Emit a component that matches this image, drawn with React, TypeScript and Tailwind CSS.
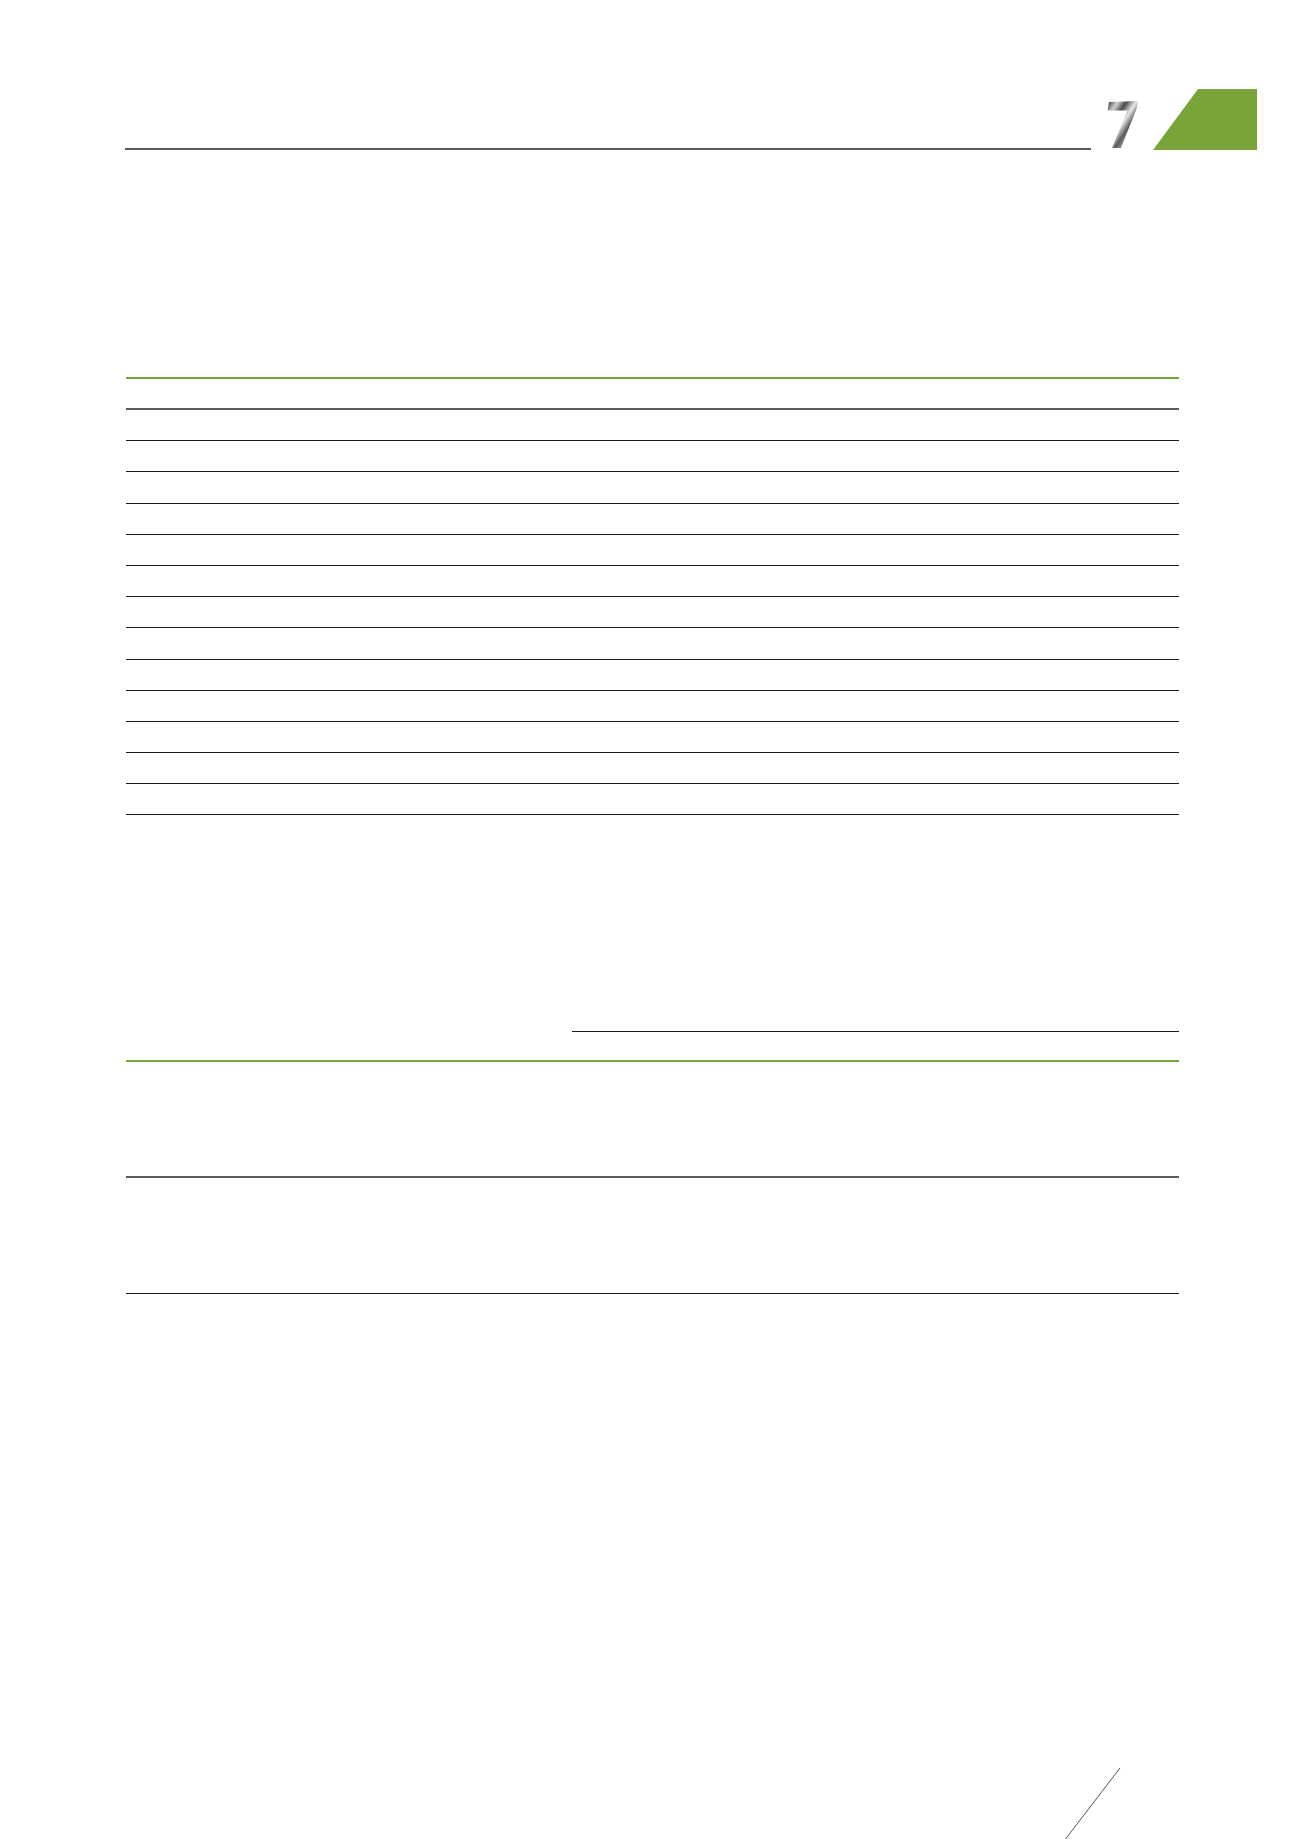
const green = "border-[#78a43a]";

function SevenMark() {
  return (
    <svg width="31" height="48" viewBox="0 0 31 48" className="ml-[16px] mb-[1px]">
      <defs>
        <linearGradient id="chrome" x1="0" y1="0" x2="1" y2="1">
          <stop offset="0" stopColor="#2a2a2a" />
          <stop offset="0.18" stopColor="#d0d0d0" />
          <stop offset="0.32" stopColor="#4a4a4a" />
          <stop offset="0.48" stopColor="#e8e8e8" />
          <stop offset="0.62" stopColor="#5a5a5a" />
          <stop offset="0.78" stopColor="#bdbdbd" />
          <stop offset="1" stopColor="#111111" />
        </linearGradient>
      </defs>
      <path d="M2 1 L31 0 L29.5 8 L14 47 L5 47 L20.5 9.5 L0.5 9.5 Z" fill="url(#chrome)" />
    </svg>
  );
}

function Header() {
  return (
    <div className="flex items-end pl-[125px] pt-[89px]">
      <div className="w-[966px] h-[2px] bg-[#5a5a5a]" />
      <SevenMark />
      <svg width="104" height="61" viewBox="0 0 104 61" className="ml-[15px]">
        <polygon points="0,61 45,0 104,0 104,61" fill="#78a43a" />
      </svg>
    </div>
  );
}

function FirstTable() {
  const cols = [0, 1, 2];
  const rows = Array.from({ length: 13 }, (_, i) => i);
  return (
    <div className="mt-[227px] pl-[126px]">
      <div className="grid w-[1053px] grid-cols-[470px_291px_292px]">
        {cols.map((c) => (
          <div key={`h${c}`} className={`h-[33px] border-t-2 ${green} border-b-2 border-b-[#5a5a5a]`} />
        ))}
        {rows.map((r) =>
          cols.map((c) => (
            <div key={`${r}-${c}`} className="h-[31.2px] border-b border-[#1a1a1a]" />
          ))
        )}
      </div>
    </div>
  );
}

function SecondTable() {
  const cols = [0, 1, 2, 3, 4, 5, 6];
  return (
    <div className="mt-[216px] pl-[126px]">
      <div className="grid w-[1053px] grid-cols-[446px_75px_73px_74px_155px_155px_75px]">
        {cols.map((i) => (
          <div
            key={`h${i}`}
            className={`h-[31px] border-b-2 ${green} ${i === 0 ? "" : "border-t border-t-[#1a1a1a]"}`}
          />
        ))}
        {cols.map((i) => (
          <div key={`a${i}`} className="h-[116px] border-b-2 border-[#5a5a5a]" />
        ))}
        {cols.map((i) => (
          <div key={`b${i}`} className="h-[116px] border-b border-[#1a1a1a]" />
        ))}
      </div>
    </div>
  );
}

export default function App() {
  return (
    <div className="relative w-[1300px] h-[1839px] overflow-hidden bg-white font-['Liberation_Sans',sans-serif]">
      <Header />
      <FirstTable />
      <SecondTable />
      <svg width="70" height="80" viewBox="0 0 70 80" className="absolute left-[1060px] top-[1760px]">
        <line x1="60" y1="8" x2="4" y2="81" stroke="#555" strokeWidth="1" />
      </svg>
    </div>
  );
}
